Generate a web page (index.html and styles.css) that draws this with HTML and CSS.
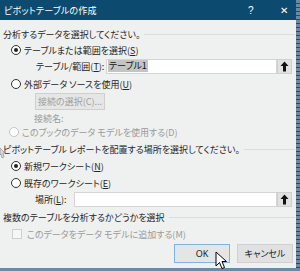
FILE: index.html
```html
<!DOCTYPE html>
<html lang="ja">
<head>
<meta charset="utf-8">
<link rel="stylesheet" href="styles.css">
</head>
<body>
<div class="screen">
  <div class="dialog">
    <div class="titlebar">
      <span class="title">ピボットテーブルの作成</span>
      <span class="help">?</span>
      <span class="close">✕</span>
    </div>
    <div class="content">
      <div class="heading r-h1"><span>分析するデータを選択してください。</span><i class="rule"></i></div>
      <div class="row r-radio1"><span class="radio on"></span><span>テーブルまたは範囲を選択(<u>S</u>)</span></div>
      <div class="row r-input1">
        <span class="label lbl-table">テーブル/範囲(<u>T</u>):</span>
        <div class="field field-table"><span class="sel">テーブル1</span></div>
        <span class="pick"><svg width="9" height="11" viewBox="0 0 9 11"><path d="M4.5 0.5 L8.5 5 H6 V10.5 H3 V5 H0.5 Z" fill="#111"/></svg></span>
      </div>
      <div class="row r-radio2"><span class="radio"></span><span>外部データ ソースを使用(<u>U</u>)</span></div>
      <div class="row r-btn"><span class="btn-disabled">接続の選択(C)...</span></div>
      <div class="row r-conn disabled"><span>接続名:</span></div>
      <div class="row r-radio3 disabled"><span class="radio off"></span><span>このブックのデータ モデルを使用する(D)</span></div>
      <div class="heading r-h2"><span>ピボットテーブル レポートを配置する場所を選択してください。</span><i class="rule"></i></div>
      <div class="row r-radio4"><span class="radio on"></span><span>新規ワークシート(<u>N</u>)</span></div>
      <div class="row r-radio5"><span class="radio"></span><span>既存のワークシート(<u>E</u>)</span></div>
      <div class="row r-input2">
        <span class="label lbl-place">場所(<u>L</u>):</span>
        <div class="field field-place"></div>
        <span class="pick"><svg width="9" height="11" viewBox="0 0 9 11"><path d="M4.5 0.5 L8.5 5 H6 V10.5 H3 V5 H0.5 Z" fill="#111"/></svg></span>
      </div>
      <div class="heading r-h3"><span>複数のテーブルを分析するかどうかを選択</span><i class="rule"></i></div>
      <div class="row r-check disabled"><span class="check"></span><span>このデータをデータ モデルに追加する(M)</span></div>
      <div class="buttons">
        <span class="btn ok">OK</span>
        <span class="btn">キャンセル</span>
      </div>
    </div>
    <svg class="edge-cursor" width="7" height="14" viewBox="0 0 7 14"><path d="M0 2 L5 7 L3 7 L4 11 L2 12 L1 8 L0 9 Z" fill="#d8d8d8" stroke="#888" stroke-width="0.6"/></svg>
    <svg class="cursor" width="13" height="19" viewBox="0 0 13 19"><path d="M1 1 V15 L4.5 11.5 L7 17.5 L9.5 16.5 L7 10.5 H11.5 Z" fill="#fff" stroke="#000" stroke-width="1"/></svg>
  </div>
</div>
</body>
</html>
```

FILE: styles.css
```css
* { box-sizing: border-box; }
html, body { margin: 0; padding: 0; }
body {
  width: 300px;
  height: 271px;
  overflow: hidden;
  font-family: "Noto Sans CJK JP", "Noto Sans", sans-serif;
  font-feature-settings: "palt";
  font-size: 9px;
  color: #262626;
  background: #5d7f9c;
}
.screen {
  width: 300px;
  height: 271px;
  background: repeating-linear-gradient(180deg, #6b8aa5 0, #6b8aa5 3px, #30465a 3px, #30465a 4px);
  padding: 0 4px 3px 0;
}
.dialog {
  position: relative;
  width: 296px;
  height: 268px;
  background: #eff0f0;
  display: flex;
  flex-direction: column;
}
.titlebar {
  height: 20px;
  background: #0d4a70;
  color: #fff;
  display: flex;
  align-items: center;
  padding-left: 4px;
}
.title { flex: 1; font-size: 9px; letter-spacing: 0.2px; }
.help { width: 32px; font-family: "Liberation Sans", sans-serif; font-size: 10px; }
.close { width: 16px; font-family: "DejaVu Sans", sans-serif; font-size: 10px; }
.content {
  display: flex;
  flex-direction: column;
  padding: 6px 0 0 3px;
}
.heading {
  display: flex;
  align-items: center;
  gap: 4px;
  height: 16px;
}
.rule {
  flex: 1;
  height: 1px;
  background: #dcdede;
  margin-right: 1px;
}
.row {
  display: flex;
  align-items: center;
  height: 16px;
}
u { text-decoration: underline; text-underline-offset: 1px; }
.radio {
  width: 10px;
  height: 10px;
  border: 1px solid #333;
  border-radius: 50%;
  background: #fff;
  margin: 0 3px 0 8px;
  display: flex;
  align-items: center;
  justify-content: center;
}
.radio.on::after {
  content: "";
  width: 4px;
  height: 4px;
  border-radius: 50%;
  background: #222;
}
.radio.off { border-color: #c5c5c5; }
.disabled { color: #9a9a9a; }
.r-radio1 { margin-top: 0; }
.label { padding-left: 33px; width: 103px; }
.lbl-place { width: 71px; padding-left: 32px; }
.field {
  flex: 0 0 auto;
  height: 15px;
  background: #fff;
  border: 1px solid #d5d5d5;
  display: flex;
  align-items: center;
  padding-left: 1px;
}
.field-table { width: 171px; }
.field-place { width: 203px; }
.sel { background: #c4c4c4; color: #111; padding: 0 1px; line-height: 12px; }
.pick {
  width: 15px;
  height: 15px;
  background: #e1e1e1;
  border: 1px solid #cfcfcf;
  display: flex;
  align-items: center;
  justify-content: center;
}
.r-radio2 { margin-top: 2px; }
.r-btn { height: 18px; padding-left: 32px; }
.btn-disabled {
  width: 70px;
  height: 17px;
  border: 1px solid #cfcfcf;
  background: #e6e6e6;
  color: #9f9f9f;
  display: flex;
  align-items: center;
  justify-content: center;
}
.r-conn { padding-left: 31px; }
.r-radio3 { margin-top: -2px; }
.r-radio3 .radio { margin-left: 6px; }
.r-h2 { margin-top: 1px; }
.r-radio4 { margin-top: 1px; }
.r-radio5 { margin-top: 1px; }
.r-h3 { margin-top: 2px; }
.r-check { margin-top: 1px; }
.check {
  width: 10px;
  height: 10px;
  border: 1px solid #cfcfcf;
  background: #f6f6f6;
  margin: 0 5px 0 9px;
}
.buttons {
  display: flex;
  justify-content: flex-end;
  gap: 7px;
  margin-top: 2px;
  padding-right: 3px;
}
.btn {
  width: 56px;
  height: 19px;
  background: #e1e1e1;
  border: 1px solid #d0d0d0;
  display: flex;
  align-items: center;
  justify-content: center;
  font-size: 9px;
  color: #222;
}
.btn.ok {
  border: 1px solid #7fb3e5;
  background: #e5e5e5;
  font-family: "Noto Sans", sans-serif;
}
.cursor {
  position: absolute;
  left: 215px;
  top: 251px;
}
.edge-cursor {
  position: absolute;
  left: 0;
  top: 146px;
}
```
